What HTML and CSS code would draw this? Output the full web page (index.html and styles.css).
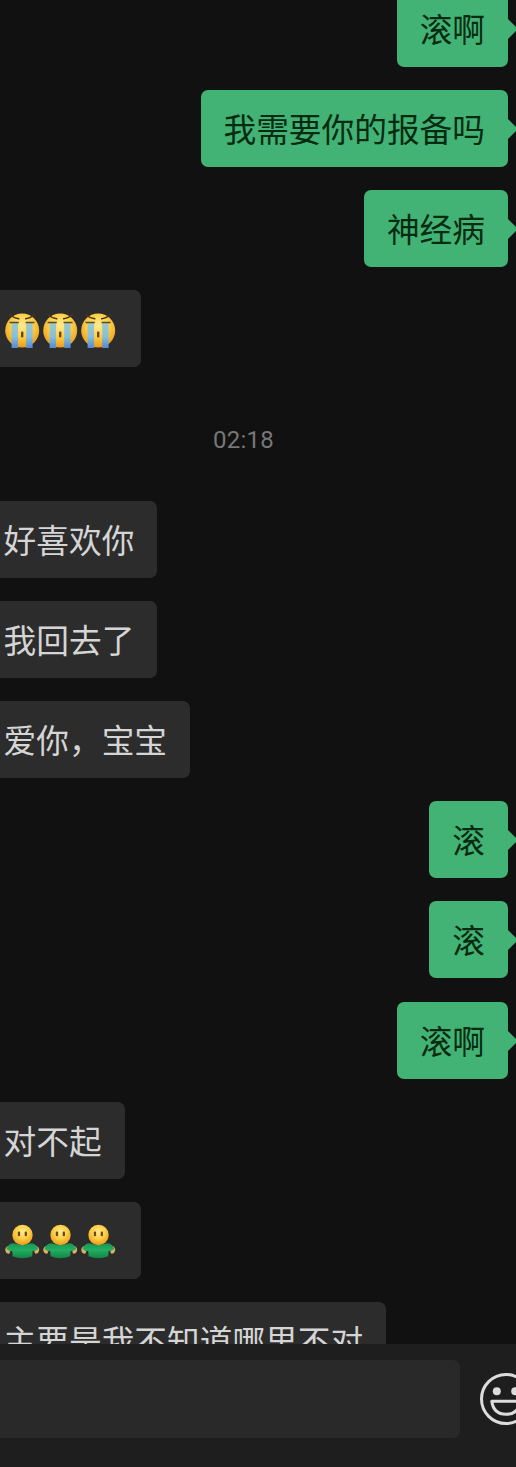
FILE: index.html
```
<!DOCTYPE html>
<html lang="zh-CN">
<head>
    <meta charset="UTF-8">
    <meta name="viewport" content="width=device-width, initial-scale=1.0">
    <title>聊天</title>
    <link rel="stylesheet" href="styles.css">
</head>
<body>
    <!-- emoji shapes, reused in the messages -->
    <svg class="defs" width="0" height="0">
        <defs>
            <radialGradient id="skin" cx="50%" cy="35%" r="65%">
                <stop offset="0" stop-color="#ffeb94"/>
                <stop offset="0.5" stop-color="#fdd046"/>
                <stop offset="1" stop-color="#e99b1d"/>
            </radialGradient>
            <linearGradient id="tear" x1="0" y1="0" x2="0" y2="1">
                <stop offset="0" stop-color="#9cc9c8"/>
                <stop offset="0.55" stop-color="#86bfdc"/>
                <stop offset="1" stop-color="#5689cf"/>
            </linearGradient>
            <linearGradient id="shirt" x1="0" y1="0" x2="0" y2="1">
                <stop offset="0" stop-color="#159652"/>
                <stop offset="0.45" stop-color="#24ae63"/>
                <stop offset="1" stop-color="#0f8544"/>
            </linearGradient>
            <symbol id="cry" viewBox="0 0 38 38">
                <circle cx="19.2" cy="20.5" r="17" fill="url(#skin)"/>
                <rect x="8.6" y="13" width="6.4" height="25" fill="url(#tear)"/>
                <rect x="23.2" y="13" width="6.4" height="25" fill="url(#tear)"/>
                <path d="M6.5 12.4H15.8M22.6 12.4H31.5" stroke="#5c4a20" stroke-width="1.5"/>
                <path d="M6.7 4.2Q10 7.7 15.8 8.8M31.5 4.2Q28.5 7.7 22.7 8.8" fill="none" stroke="#493414" stroke-width="1.5" stroke-linecap="round"/>
                <rect x="18" y="21.5" width="2.4" height="6" rx="1" fill="#6e4510"/>
            </symbol>
            <symbol id="shrug" viewBox="0 0 38 38">
                <path d="M5 25Q1.5 27 2.4 30Q3.2 33.2 6.5 32.5L8 28ZM33.6 25Q37 27 36 30Q35.2 33.2 32 32.5L30.5 28Z" fill="#deb05c"/>
                <path d="M10 22.3Q19.3 25 28.6 22.3Q33.5 22.8 35.3 28L31.6 30.3L29.6 29.8L29.2 35.2Q19.3 39.2 9.6 35.2L9.2 29.8L7 30.3L3.4 28Q5 22.8 10 22.3Z" fill="url(#shirt)"/>
                <circle cx="19.5" cy="14" r="10.2" fill="url(#skin)"/>
                <rect x="14.8" y="10.6" width="2.3" height="4.6" rx="1" fill="#6a4917"/>
                <rect x="21.7" y="10.6" width="2.3" height="4.6" rx="1" fill="#6a4917"/>
            </symbol>
        </defs>
    </svg>

    <div class="chat">
        <div class="msg sent">滚啊</div>
        <div class="msg sent">我需要你的报备吗</div>
        <div class="msg sent">神经病</div>
        <div class="msg received">
            <svg class="emoji"><use href="#cry"/></svg>
            <svg class="emoji"><use href="#cry"/></svg>
            <svg class="emoji"><use href="#cry"/></svg>
        </div>
        <div class="time">02:18</div>
        <div class="msg received">好喜欢你</div>
        <div class="msg received">我回去了</div>
        <div class="msg received">爱你，宝宝</div>
        <div class="msg sent">滚</div>
        <div class="msg sent">滚</div>
        <div class="msg sent">滚啊</div>
        <div class="msg received">对不起</div>
        <div class="msg received">
            <svg class="emoji"><use href="#shrug"/></svg>
            <svg class="emoji"><use href="#shrug"/></svg>
            <svg class="emoji"><use href="#shrug"/></svg>
        </div>
        <div class="msg received">主要是我不知道哪里不对</div>
    </div>

    <div class="footer">
        <div class="input-box"></div>
        <svg class="smile" viewBox="0 0 54 54" fill="none" stroke="#dcdcdc" stroke-width="3">
            <circle cx="27" cy="27" r="24.5"/>
            <circle cx="17.8" cy="19.3" r="4" fill="#dcdcdc" stroke="none"/>
            <circle cx="36.2" cy="19.3" r="4" fill="#dcdcdc" stroke="none"/>
            <path d="M12.8 29.3H41.2Q39.5 42.3 27 42.3Q14.5 42.3 12.8 29.3Z" stroke-linejoin="round"/>
        </svg>
    </div>
</body>
</html>
```

FILE: styles.css
```
body {
    margin: 0;
    height: 1467px;
    display: flex;
    flex-direction: column;
    overflow: hidden;
    background-color: #111111;
    font-family: "Noto Sans CJK SC", sans-serif;
}
.defs {
    position: absolute;
}
.chat {
    display: flex;
    flex-direction: column;
    height: 1344px;
    overflow: hidden;
}
.msg {
    display: flex;
    align-items: center;
    flex-shrink: 0;
    box-sizing: border-box;
    height: 77px;
    margin-bottom: 23.13px;
    padding-bottom: 2px;
    font-size: 32.7px;
    line-height: 75px;
    white-space: nowrap;
}
.msg:first-child {
    margin-top: -10px;
}
.sent {
    position: relative;
    align-self: flex-end;
    margin-right: 8px;
    padding-left: 23px;
    padding-right: 23px;
    border-radius: 7px;
    background-color: #42b374;
    color: #062b12;
}
/* bubble arrow */
.sent::after {
    content: "";
    position: absolute;
    left: 100%;
    top: 29px;
    border: 10px solid transparent;
    border-left-color: #42b374;
    border-right: 0;
}
.received {
    align-self: flex-start;
    padding-left: 3.6px;
    padding-right: 23px;
    border-radius: 0 7px 7px 0;
    background-color: #2c2c2c;
    color: #d5d5d5;
}
.emoji {
    width: 38px;
    height: 38px;
    margin: 2px 0.6px 0 -0.6px;
}
.time {
    flex-shrink: 0;
    height: 110.4px;
    padding-right: 29px;
    font-family: Roboto, sans-serif;
    font-size: 24px;
    line-height: 98px;
    letter-spacing: 0.2px;
    text-align: center;
    color: #777777;
}
.footer {
    display: flex;
    align-items: flex-start;
    flex: 1;
    padding-top: 16px;
    background-color: #1e1e1e;
}
.input-box {
    flex-shrink: 0;
    width: 460px;
    height: 78px;
    border-radius: 0 7px 7px 0;
    background-color: #292929;
}
.smile {
    flex-shrink: 0;
    width: 54px;
    height: 54px;
    margin: 11.5px 0 0 19.3px;
}
```
